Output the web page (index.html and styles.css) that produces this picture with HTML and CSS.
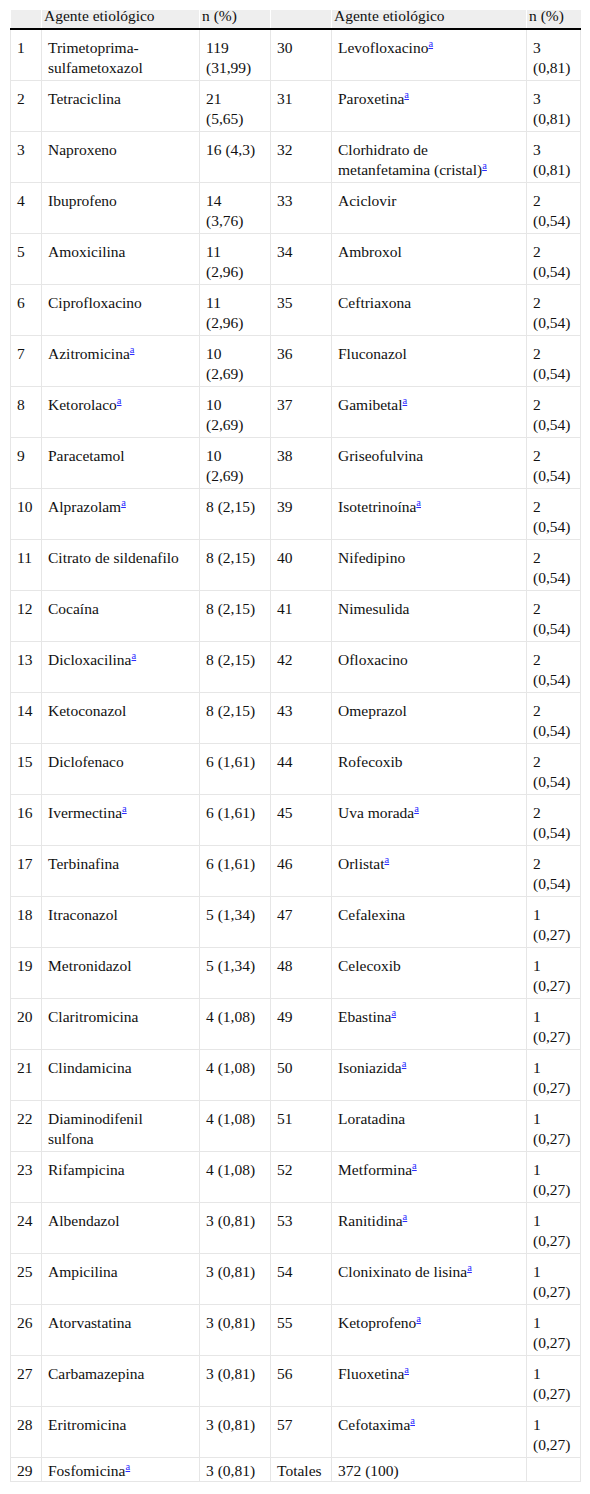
FILE: index.html
```html
<!DOCTYPE html>
<html lang="es">
<head>
<meta charset="utf-8">
<link rel="stylesheet" href="styles.css">
</head>
<body>
<div class="wrap">
<table class="tbl">
<colgroup>
<col class="c1"><col class="c2"><col class="c3"><col class="c4"><col class="c5"><col class="c6">
</colgroup>
<thead>
<tr><th></th><th>Agente etiológico</th><th>n (%)</th><th></th><th>Agente etiológico</th><th>n (%)</th></tr>
</thead>
<tbody>
<tr><td>1</td><td>Trimetoprima-sulfametoxazol</td><td>119 (31,99)</td><td>30</td><td>Levofloxacino<sup><a href="#">a</a></sup></td><td>3 (0,81)</td></tr>
<tr><td>2</td><td>Tetraciclina</td><td>21 (5,65)</td><td>31</td><td>Paroxetina<sup><a href="#">a</a></sup></td><td>3 (0,81)</td></tr>
<tr><td>3</td><td>Naproxeno</td><td>16 (4,3)</td><td>32</td><td>Clorhidrato de metanfetamina (cristal)<sup><a href="#">a</a></sup></td><td>3 (0,81)</td></tr>
<tr><td>4</td><td>Ibuprofeno</td><td>14 (3,76)</td><td>33</td><td>Aciclovir</td><td>2 (0,54)</td></tr>
<tr><td>5</td><td>Amoxicilina</td><td>11 (2,96)</td><td>34</td><td>Ambroxol</td><td>2 (0,54)</td></tr>
<tr><td>6</td><td>Ciprofloxacino</td><td>11 (2,96)</td><td>35</td><td>Ceftriaxona</td><td>2 (0,54)</td></tr>
<tr><td>7</td><td>Azitromicina<sup><a href="#">a</a></sup></td><td>10 (2,69)</td><td>36</td><td>Fluconazol</td><td>2 (0,54)</td></tr>
<tr><td>8</td><td>Ketorolaco<sup><a href="#">a</a></sup></td><td>10 (2,69)</td><td>37</td><td>Gamibetal<sup><a href="#">a</a></sup></td><td>2 (0,54)</td></tr>
<tr><td>9</td><td>Paracetamol</td><td>10 (2,69)</td><td>38</td><td>Griseofulvina</td><td>2 (0,54)</td></tr>
<tr><td>10</td><td>Alprazolam<sup><a href="#">a</a></sup></td><td>8 (2,15)</td><td>39</td><td>Isotetrinoína<sup><a href="#">a</a></sup></td><td>2 (0,54)</td></tr>
<tr><td>11</td><td>Citrato de sildenafilo</td><td>8 (2,15)</td><td>40</td><td>Nifedipino</td><td>2 (0,54)</td></tr>
<tr><td>12</td><td>Cocaína</td><td>8 (2,15)</td><td>41</td><td>Nimesulida</td><td>2 (0,54)</td></tr>
<tr><td>13</td><td>Dicloxacilina<sup><a href="#">a</a></sup></td><td>8 (2,15)</td><td>42</td><td>Ofloxacino</td><td>2 (0,54)</td></tr>
<tr><td>14</td><td>Ketoconazol</td><td>8 (2,15)</td><td>43</td><td>Omeprazol</td><td>2 (0,54)</td></tr>
<tr><td>15</td><td>Diclofenaco</td><td>6 (1,61)</td><td>44</td><td>Rofecoxib</td><td>2 (0,54)</td></tr>
<tr><td>16</td><td>Ivermectina<sup><a href="#">a</a></sup></td><td>6 (1,61)</td><td>45</td><td>Uva morada<sup><a href="#">a</a></sup></td><td>2 (0,54)</td></tr>
<tr><td>17</td><td>Terbinafina</td><td>6 (1,61)</td><td>46</td><td>Orlistat<sup><a href="#">a</a></sup></td><td>2 (0,54)</td></tr>
<tr><td>18</td><td>Itraconazol</td><td>5 (1,34)</td><td>47</td><td>Cefalexina</td><td>1 (0,27)</td></tr>
<tr><td>19</td><td>Metronidazol</td><td>5 (1,34)</td><td>48</td><td>Celecoxib</td><td>1 (0,27)</td></tr>
<tr><td>20</td><td>Claritromicina</td><td>4 (1,08)</td><td>49</td><td>Ebastina<sup><a href="#">a</a></sup></td><td>1 (0,27)</td></tr>
<tr><td>21</td><td>Clindamicina</td><td>4 (1,08)</td><td>50</td><td>Isoniazida<sup><a href="#">a</a></sup></td><td>1 (0,27)</td></tr>
<tr><td>22</td><td>Diaminodifenil sulfona</td><td>4 (1,08)</td><td>51</td><td>Loratadina</td><td>1 (0,27)</td></tr>
<tr><td>23</td><td>Rifampicina</td><td>4 (1,08)</td><td>52</td><td>Metformina<sup><a href="#">a</a></sup></td><td>1 (0,27)</td></tr>
<tr><td>24</td><td>Albendazol</td><td>3 (0,81)</td><td>53</td><td>Ranitidina<sup><a href="#">a</a></sup></td><td>1 (0,27)</td></tr>
<tr><td>25</td><td>Ampicilina</td><td>3 (0,81)</td><td>54</td><td>Clonixinato de lisina<sup><a href="#">a</a></sup></td><td>1 (0,27)</td></tr>
<tr><td>26</td><td>Atorvastatina</td><td>3 (0,81)</td><td>55</td><td>Ketoprofeno<sup><a href="#">a</a></sup></td><td>1 (0,27)</td></tr>
<tr><td>27</td><td>Carbamazepina</td><td>3 (0,81)</td><td>56</td><td>Fluoxetina<sup><a href="#">a</a></sup></td><td>1 (0,27)</td></tr>
<tr><td>28</td><td>Eritromicina</td><td>3 (0,81)</td><td>57</td><td>Cefotaxima<sup><a href="#">a</a></sup></td><td>1 (0,27)</td></tr>
<tr class="last"><td>29</td><td>Fosfomicina<sup><a href="#">a</a></sup></td><td>3 (0,81)</td><td>Totales</td><td>372 (100)</td><td></td></tr>
</tbody>
</table>
</div>
</body>
</html>
```

FILE: styles.css
```css
html, body {
  margin: 0;
  padding: 0;
  background: #fff;
}

.wrap {
  padding: 10px 10px 0 10px;
}

.tbl {
  width: 570px;
  border-collapse: collapse;
  table-layout: fixed;
  font-family: "Liberation Serif", "Times New Roman", serif;
  font-size: 15.5px;
  color: #111;
}

.c1 { width: 31px; }
.c2 { width: 158px; }
.c3 { width: 71px; }
.c4 { width: 61px; }
.c5 { width: 195px; }
.c6 { width: 54px; }

.tbl th {
  background: #eeeeee;
  font-weight: normal;
  text-align: left;
  line-height: 12px;
  padding: 0 2px 6px 2px;
  border-bottom: 2px solid #000;
  border-left: 1px solid #fff;
}

.tbl th:first-child {
  border-left: none;
}

.tbl td {
  border: 1px solid #e6e6e6;
  vertical-align: top;
  text-align: left;
  line-height: 20px;
  padding: 8px 8px 2px 6px;
}

.tbl tr.last td {
  line-height: 20px;
  padding-top: 3px;
  padding-bottom: 0;
}

.tbl sup {
  font-size: 10.5px;
  line-height: 0;
  vertical-align: 6px;
}

.tbl sup a {
  color: #2a2aff;
  text-decoration: underline;
}
```
